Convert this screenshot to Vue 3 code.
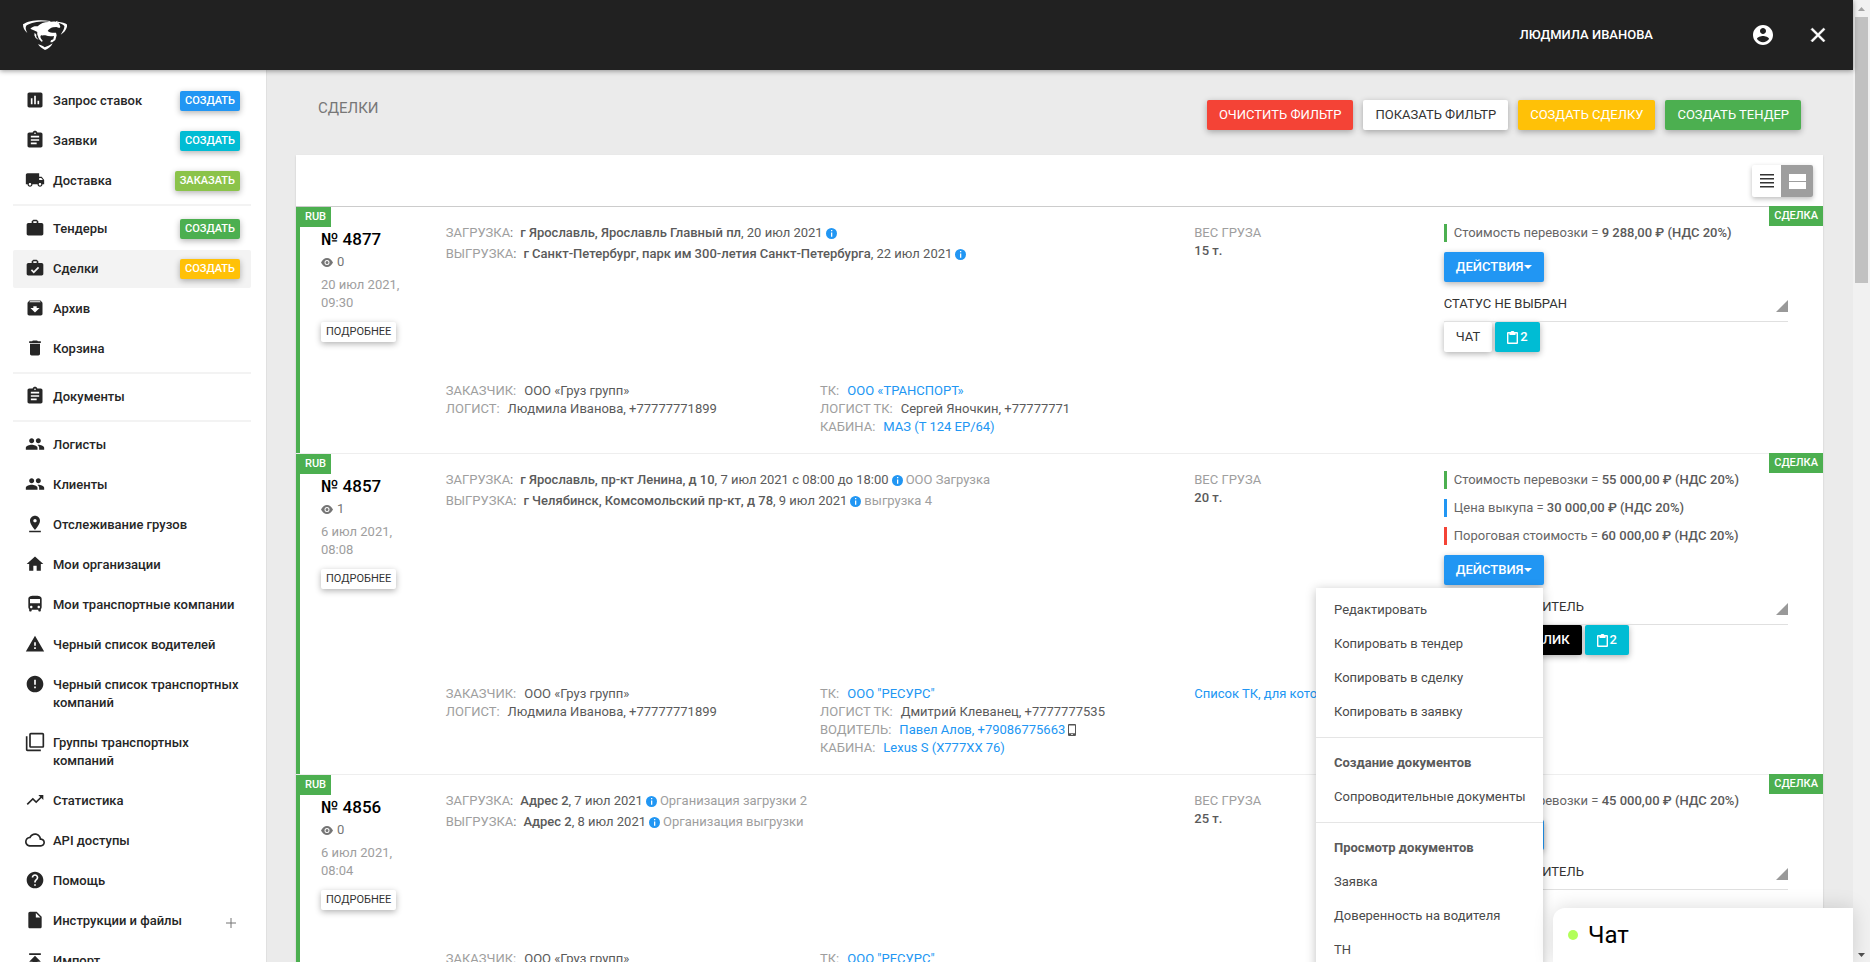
<script setup>
const icons = {
  chart: 'M19 3H5c-1.1 0-2 .9-2 2v14c0 1.1.9 2 2 2h14c1.1 0 2-.9 2-2V5c0-1.1-.9-2-2-2zM9 17H7v-7h2v7zm4 0h-2V7h2v10zm4 0h-2v-4h2v4z',
  clipboard: 'M19 3h-4.18C14.4 1.84 13.3 1 12 1s-2.4.84-2.82 2H5c-1.1 0-2 .9-2 2v14c0 1.1.9 2 2 2h14c1.1 0 2-.9 2-2V5c0-1.1-.9-2-2-2zm-7 0c.55 0 1 .45 1 1s-.45 1-1 1-1-.45-1-1 .45-1 1-1zm2 14H7v-2h7v2zm3-4H7v-2h10v2zm0-4H7V7h10v2z',
  truck: 'M20 8h-3V4H3c-1.1 0-2 .9-2 2v11h2c0 1.66 1.34 3 3 3s3-1.34 3-3h6c0 1.66 1.34 3 3 3s3-1.34 3-3h2v-5l-3-4zM6 18.5c-.83 0-1.5-.67-1.5-1.5s.67-1.5 1.5-1.5 1.5.67 1.5 1.5-.67 1.5-1.5 1.5zm13.5-9l1.96 2.5H17V9.5h2.5zm-1.5 9c-.83 0-1.5-.67-1.5-1.5s.67-1.5 1.5-1.5 1.5.67 1.5 1.5-.67 1.5-1.5 1.5z',
  case: 'M20 6h-4V4l-2-2h-4L8 4v2H4c-1.1 0-2 .9-2 2v11c0 1.1.9 2 2 2h16c1.1 0 2-.9 2-2V8c0-1.1-.9-2-2-2zm-6 0h-4V4h4v2z',
  caseCheck: 'M20 6h-4V4l-2-2h-4L8 4v2H4c-1.1 0-2 .9-2 2v11c0 1.1.9 2 2 2h16c1.1 0 2-.9 2-2V8c0-1.1-.9-2-2-2zM10 4h4v2h-4V4zm.5 14.5L7 15l1.4-1.4 2.1 2.1 5.1-5.1L17 12l-6.5 6.5z',
  archive: 'M20.54 5.23l-1.39-1.68C18.88 3.21 18.47 3 18 3H6c-.47 0-.88.21-1.16.55L3.46 5.23C3.17 5.57 3 6.02 3 6.5V19c0 1.1.9 2 2 2h14c1.1 0 2-.9 2-2V6.5c0-.48-.17-.93-.46-1.27zM12 17.5L6.5 12H10v-2h4v2h3.5L12 17.5zM5.12 5l.81-1h12l.94 1H5.12z',
  trash: 'M6 19c0 1.1.9 2 2 2h8c1.1 0 2-.9 2-2V7H6v12zM19 4h-3.5l-1-1h-5l-1 1H5v2h14V4z',
  people: 'M16 11c1.66 0 2.99-1.34 2.99-3S17.66 5 16 5s-3 1.34-3 3 1.34 3 3 3zm-8 0c1.66 0 2.99-1.34 2.99-3S9.66 5 8 5 5 6.34 5 8s1.34 3 3 3zm0 2c-2.33 0-7 1.17-7 3.5V19h14v-2.5c0-2.33-4.67-3.5-7-3.5zm8 0c-.29 0-.62.02-.97.05 1.16.84 1.97 1.97 1.97 3.45V19h6v-2.5c0-2.33-4.67-3.5-7-3.5z',
  pin: 'M18 8c0-3.31-2.69-6-6-6S6 4.69 6 8c0 4.5 6 11 6 11s6-6.5 6-11zm-8 0c0-1.1.9-2 2-2s2 .9 2 2-.89 2-2 2-2-.9-2-2zM5 20v2h14v-2H5z',
  home: 'M10 20v-6h4v6h5v-8h3L12 3 2 12h3v8z',
  bus: 'M12 2c-4.42 0-8 .5-8 4v10c0 .88.39 1.67 1 2.22V20c0 .55.45 1 1 1h1c.55 0 1-.45 1-1v-1h8v1c0 .55.45 1 1 1h1c.55 0 1-.45 1-1v-1.78c.61-.55 1-1.34 1-2.22V6c0-3.5-3.58-4-8-4zM7.5 17c-.83 0-1.5-.67-1.5-1.5S6.67 14 7.5 14s1.5.67 1.5 1.5S8.33 17 7.5 17zm9 0c-.83 0-1.5-.67-1.5-1.5s.67-1.5 1.5-1.5 1.5.67 1.5 1.5-.67 1.5-1.5 1.5zM18 11H6V6h12v5z',
  warning: 'M1 21h22L12 2 1 21zm12-3h-2v-2h2v2zm0-4h-2v-4h2v4z',
  error: 'M12 2C6.48 2 2 6.48 2 12s4.48 10 10 10 10-4.48 10-10S17.52 2 12 2zm1 15h-2v-2h2v2zm0-4h-2V7h2v6z',
  frames: 'M3 5H1v16c0 1.1.9 2 2 2h16v-2H3V5zm18-4H7c-1.1 0-2 .9-2 2v14c0 1.1.9 2 2 2h14c1.1 0 2-.9 2-2V3c0-1.1-.9-2-2-2zm0 16H7V3h14v14z',
  trend: 'M16 6l2.29 2.29-4.88 4.88-4-4L2 16.59 3.41 18l6-6 4 4 6.3-6.29L22 12V6z',
  cloud: 'M19.35 10.04C18.67 6.59 15.64 4 12 4 9.11 4 6.6 5.64 5.35 8.04 2.34 8.36 0 10.91 0 14c0 3.31 2.69 6 6 6h13c2.76 0 5-2.24 5-5 0-2.64-2.05-4.78-4.65-4.96zM19 18H6c-2.21 0-4-1.79-4-4s1.79-4 4-4h.71C7.37 7.69 9.48 6 12 6c3.04 0 5.5 2.46 5.5 5.5v.5H19c1.66 0 3 1.34 3 3s-1.34 3-3 3z',
  help: 'M12 2C6.48 2 2 6.48 2 12s4.48 10 10 10 10-4.48 10-10S17.52 2 12 2zm1 17h-2v-2h2v2zm2.07-7.75l-.9.92C13.45 12.9 13 13.5 13 15h-2v-.5c0-1.1.45-2.1 1.17-2.83l1.24-1.26c.37-.36.59-.86.59-1.41 0-1.1-.9-2-2-2s-2 .9-2 2H8c0-2.21 1.79-4 4-4s4 1.79 4 4c0 .88-.36 1.68-.93 2.25z',
  file: 'M6 2c-1.1 0-2 .9-2 2v16c0 1.1.9 2 2 2h12c1.1 0 2-.9 2-2V8l-6-6H6zm7 7V3.5L18.5 9H13z',
  upload: 'M5 4v2h14V4H5zm0 10h4v6h6v-6h4l-7-7-7 7z'
}

const groups = [
  [
    { icon: 'chart', label: 'Запрос ставок', action: 'Создать', tone: 'blue' },
    { icon: 'clipboard', label: 'Заявки', action: 'Создать', tone: 'cyan' },
    { icon: 'truck', label: 'Доставка', action: 'Заказать', tone: 'lime' }
  ],
  [
    { icon: 'case', label: 'Тендеры', action: 'Создать', tone: 'green' },
    { icon: 'caseCheck', label: 'Сделки', action: 'Создать', tone: 'amber', active: true },
    { icon: 'archive', label: 'Архив' },
    { icon: 'trash', label: 'Корзина' }
  ],
  [{ icon: 'clipboard', label: 'Документы' }],
  [
    { icon: 'people', label: 'Логисты' },
    { icon: 'people', label: 'Клиенты' },
    { icon: 'pin', label: 'Отслеживание грузов' },
    { icon: 'home', label: 'Мои организации' },
    { icon: 'bus', label: 'Мои транспортные компании' },
    { icon: 'warning', label: 'Черный список водителей' },
    { icon: 'error', label: 'Черный список транспортных компаний' },
    { icon: 'frames', label: 'Группы транспортных компаний' },
    { icon: 'trend', label: 'Статистика' },
    { icon: 'cloud', label: 'API доступы' },
    { icon: 'help', label: 'Помощь' },
    { icon: 'file', label: 'Инструкции и файлы', expandable: true },
    { icon: 'upload', label: 'Импорт' }
  ]
]

const customer = [
  { label: 'Заказчик', value: 'ООО «Груз групп»' },
  { label: 'Логист', value: 'Людмила Иванова, +77777771899' }
]

const deals = [
  {
    number: 4877,
    views: 0,
    created: '20 июл 2021, 09:30',
    route: [
      { label: 'Загрузка', address: 'г Ярославль, Ярославль Главный пл', date: '20 июл 2021' },
      { label: 'Выгрузка', address: 'г Санкт-Петербург, парк им 300-летия Санкт-Петербурга', date: '22 июл 2021' }
    ],
    weight: '15 т.',
    prices: [{ label: 'Стоимость перевозки', value: '9 288,00 ₽ (НДС 20%)', tone: 'green' }],
    status: 'Статус не выбран',
    files: 2,
    carrier: [
      { label: 'ТК', value: 'ООО «ТРАНСПОРТ»', link: true },
      { label: 'Логист ТК', value: 'Сергей Яночкин, +77777771' },
      { label: 'Кабина', value: 'МАЗ (Т 124 ЕР/64)', link: true }
    ]
  },
  {
    number: 4857,
    views: 1,
    created: '6 июл 2021, 08:08',
    route: [
      { label: 'Загрузка', address: 'г Ярославль, пр-кт Ленина, д 10', date: '7 июл 2021 с 08:00 до 18:00', note: 'ООО Загрузка' },
      { label: 'Выгрузка', address: 'г Челябинск, Комсомольский пр-кт, д 78', date: '9 июл 2021', note: 'выгрузка 4' }
    ],
    weight: '20 т.',
    prices: [
      { label: 'Стоимость перевозки', value: '55 000,00 ₽ (НДС 20%)', tone: 'green' },
      { label: 'Цена выкупа', value: '30 000,00 ₽ (НДС 20%)', tone: 'blue' },
      { label: 'Пороговая стоимость', value: '60 000,00 ₽ (НДС 20%)', tone: 'red' }
    ],
    status: 'Назначен водитель',
    response: '1 отклик',
    files: 2,
    open: true,
    hiddenFor: 'Список ТК, для которых скрыто',
    carrier: [
      { label: 'ТК', value: 'ООО "РЕСУРС"', link: true },
      { label: 'Логист ТК', value: 'Дмитрий Клеванец, +7777777535' },
      { label: 'Водитель', value: 'Павел Алов, +79086775663', link: true, phone: true },
      { label: 'Кабина', value: 'Lexus S (X777XX 76)', link: true }
    ]
  },
  {
    number: 4856,
    views: 0,
    created: '6 июл 2021, 08:04',
    route: [
      { label: 'Загрузка', address: 'Адрес 2', date: '7 июл 2021', note: 'Организация загрузки 2' },
      { label: 'Выгрузка', address: 'Адрес 2', date: '8 июл 2021', note: 'Организация выгрузки' }
    ],
    weight: '25 т.',
    prices: [{ label: 'Стоимость перевозки', value: '45 000,00 ₽ (НДС 20%)', tone: 'green' }],
    status: 'Назначен водитель',
    carrier: [{ label: 'ТК', value: 'ООО "РЕСУРС"', link: true }]
  }
]

const menu = [
  { items: ['Редактировать', 'Копировать в тендер', 'Копировать в сделку', 'Копировать в заявку'] },
  { title: 'Создание документов', items: ['Сопроводительные документы'] },
  { title: 'Просмотр документов', items: ['Заявка', 'Доверенность на водителя', 'ТН'] }
]
</script>

<template>
  <div class="window">
    <div class="app">
      <header class="topbar">
        <a class="logo" href="#" aria-label="Главная">
          <svg viewBox="0 0 132 90" width="44" height="30" fill="#fff" aria-hidden="true">
            <path d="M82 3C52-2 16 1 0 13c0 10 4 19 13 26C8 29 6 21 11 16 27 7 55 2 82 6z" />
            <path d="M105 5c12 1 24 5 28 9-1 13-8 23-20 30 7-10 12-19 11-26-5-5-11-8-19-9z" />
            <path d="M22 26c8-8 16-8 22-7 8-9 20-13 32-13 8-1 16-2 22-1l5-3 1 5c5 4 7 9 8 14l-3 3-9-3-10 1c-7 2-13 6-16 11 8 6 16 5 25 5l2 8-4 14-9 7h-6l2-6 7-3 2-10c-10 1-18 1-26-2-5 0-10 1-13 0l-2 4c1 5 4 8 7 12l-2 4c-6-5-11-9-12-17-2-4-3-8-2-13-5-4-12-5-21-10z" />
            <path d="M35 38l5 6v7l7 9-9-6-4-8z" />
            <path d="M45 73c8 2 15 5 20 9 9-3 17-7 24-12-5 11-14 17-23 20-8-4-16-9-21-17z" />
          </svg>
        </a>
        <span class="user-name">Людмила Иванова</span>
        <button class="icon-btn" type="button" aria-label="Профиль">
          <svg viewBox="0 0 24 24" width="24" height="24" fill="#fff"><path d="M12 2C6.48 2 2 6.48 2 12s4.48 10 10 10 10-4.48 10-10S17.52 2 12 2zm0 3c1.66 0 3 1.34 3 3s-1.34 3-3 3-3-1.34-3-3 1.34-3 3-3zm0 14.2c-2.5 0-4.71-1.28-6-3.22.03-1.99 4-3.08 6-3.08 1.99 0 5.97 1.09 6 3.08-1.29 1.94-3.5 3.22-6 3.22z" /></svg>
        </button>
        <button class="icon-btn" type="button" aria-label="Закрыть">
          <svg viewBox="0 0 24 24" width="24" height="24" fill="#fff" stroke="#fff" stroke-width=".5"><path d="M19 6.41L17.59 5 12 10.59 6.41 5 5 6.41 10.59 12 5 17.59 6.41 19 12 13.41 17.59 19 19 17.59 13.41 12z" /></svg>
        </button>
      </header>

      <div class="body">
        <nav class="sidebar">
          <ul v-for="(group, g) in groups" :key="g" class="nav-group">
            <li v-for="item in group" :key="item.label" class="nav-item" :class="{ active: item.active }">
              <a class="nav-link" href="#">
                <svg class="nav-icon" viewBox="0 0 24 24" width="20" height="20"><path :d="icons[item.icon]" /></svg>
                <span>{{ item.label }}</span>
              </a>
              <button v-if="item.action" type="button" class="btn small" :class="item.tone">{{ item.action }}</button>
              <svg v-if="item.expandable" class="plus" viewBox="0 0 10 10" width="10" height="10"><path d="M0 5h10M5 0v10" /></svg>
            </li>
          </ul>
        </nav>

        <main class="content">
          <div class="page-head">
            <h1>Сделки</h1>
            <div class="page-actions">
              <button type="button" class="btn red">Очистить фильтр</button>
              <button type="button" class="btn white">Показать фильтр</button>
              <button type="button" class="btn amber">Создать сделку</button>
              <button type="button" class="btn green">Создать тендер</button>
            </div>
          </div>

          <section class="card">
            <div class="card-tools">
              <div class="view-toggle">
                <button type="button" aria-label="Компактный вид">
                  <svg viewBox="0 0 14 14" width="14" height="14" fill="#333"><path d="M0 0h14v1.500H0zM0 4h14v1.500H0zM0 8h14v1.500H0zM0 12h14v1.500H0z" /></svg>
                </button>
                <button type="button" class="on" aria-label="Карточки">
                  <svg viewBox="0 0 17 15" width="17" height="15" fill="#fff"><path d="M0 0h17v7H0zM0 8h17v7H0z" /></svg>
                </button>
              </div>
            </div>

            <article v-for="deal in deals" :key="deal.number" class="deal">
              <div class="deal-body">
                <span class="tag currency">RUB</span>
                <span class="tag kind">Сделка</span>

                <div class="summary">
                  <h2>№ {{ deal.number }}</h2>
                  <p class="views">
                    <svg viewBox="0 0 24 18" width="12" height="9" fill="#757575"><path fill-rule="evenodd" d="M12 0C7 0 2.700 4 0 9c2.700 5 7 9 12 9s9.300-4 12-9c-2.700-5-7-9-12-9zm0 14a5 5 0 1 1 0-10 5 5 0 0 1 0 10zm0-2a3 3 0 1 0 0-6 3 3 0 0 0 0 6z" /></svg>
                    {{ deal.views }}
                  </p>
                  <p class="created">{{ deal.created }}</p>
                  <button type="button" class="btn small white">Подробнее</button>
                </div>

                <div class="route">
                  <p v-for="stop in deal.route" :key="stop.label">
                    <span class="label">{{ stop.label }}<i>:</i></span>
                    <span><b>{{ stop.address }}</b>, {{ stop.date }}</span>
                    <svg class="info" viewBox="0 0 11 11" width="11" height="11"><circle cx="5.500" cy="5.500" r="5.500" fill="#2196f3" /><path d="M5 2h1.300v1.300H5zM5 4.500h1.300v4.300H5z" fill="#fff" /></svg>
                    <span v-if="stop.note" class="note">{{ stop.note }}</span>
                  </p>
                </div>

                <div class="weight">
                  <p class="label">Вес груза</p>
                  <p><b>{{ deal.weight }}</b></p>
                </div>

                <div class="actions">
                  <p v-for="price in deal.prices" :key="price.label" class="price" :class="price.tone + '-bar'">
                    {{ price.label }} = <b>{{ price.value }}</b>
                  </p>
                  <div class="dropdown">
                    <button type="button" class="btn blue">
                      Действия<svg viewBox="0 0 8 4" width="8" height="4" fill="#fff"><path d="M0 0h8L4 4z" /></svg>
                    </button>
                    <div v-if="deal.open" class="menu">
                      <ul v-for="(part, m) in menu" :key="m">
                        <li v-if="part.title" class="menu-title">{{ part.title }}</li>
                        <li v-for="entry in part.items" :key="entry"><a href="#">{{ entry }}</a></li>
                      </ul>
                    </div>
                  </div>
                  <div class="select">
                    <select aria-label="Статус"><option>{{ deal.status }}</option></select>
                  </div>
                  <div class="action-row">
                    <button type="button" class="btn white">Чат</button>
                    <button v-if="deal.response" type="button" class="btn black">{{ deal.response }}</button>
                    <button v-if="deal.files" type="button" class="btn cyan">
                      <svg viewBox="0 0 11 13" width="11" height="13" fill="#fff"><path fill-rule="evenodd" d="M1 1h2.500l1-1h2l1 1H10a1 1 0 0 1 1 1v10a1 1 0 0 1-1 1H1a1 1 0 0 1-1-1V2a1 1 0 0 1 1-1zm.4 1.500v9.100h8.200V2.500H8.500V4h-6V2.500z" /></svg>{{ deal.files }}
                    </button>
                  </div>
                </div>

                <dl class="party customer">
                  <div v-for="row in customer" :key="row.label"><dt>{{ row.label }}:</dt><dd>{{ row.value }}</dd></div>
                </dl>
                <dl class="party carrier">
                  <div v-for="row in deal.carrier" :key="row.label">
                    <dt>{{ row.label }}:</dt>
                    <dd>
                      <a v-if="row.link" href="#">{{ row.value }}</a><template v-else>{{ row.value }}</template>
                      <svg v-if="row.phone" class="phone" viewBox="0 0 8 12" width="8" height="12" fill="#555"><path fill-rule="evenodd" d="M1 0h6a1 1 0 0 1 1 1v10a1 1 0 0 1-1 1H1a1 1 0 0 1-1-1V1a1 1 0 0 1 1-1zm0 1.600v7.700h6V1.600zM3 10.300v.8h2v-.8z" /></svg>
                    </dd>
                  </div>
                </dl>
                <a v-if="deal.hiddenFor" class="hidden-for" href="#">{{ deal.hiddenFor }}</a>
              </div>
            </article>
          </section>
        </main>
      </div>

      <button type="button" class="chat"><span class="dot"></span>Чат</button>
    </div>

    <div class="scrollbar" aria-hidden="true">
      <svg viewBox="0 0 17 17" width="17" height="17" fill="#a3a3a3"><path d="M8.500 7L12 11H5z" /></svg>
      <div class="thumb"></div>
      <svg class="down" viewBox="0 0 17 17" width="17" height="17" fill="#505050"><path d="M5 8h7l-3.500 4z" /></svg>
    </div>
  </div>
</template>

<style>
body {
  margin: 0;
}
</style>

<style scoped>
* {
  box-sizing: border-box;
}
.window {
  display: flex;
  height: 100vh;
  overflow: hidden;
  font: 13px/18px Roboto, "Liberation Sans", sans-serif;
  color: #5a5a5a;
  background: #ebebeb;
}
h1, h2, p, ul, dl, dd {
  margin: 0;
  padding: 0;
}
ul {
  list-style: none;
}
a {
  color: #2196f3;
  text-decoration: none;
}
b {
  font-weight: 500;
}
button, select {
  font: inherit;
  border: 0;
  padding: 0;
  background: none;
}
.app {
  position: relative;
  flex: 1;
  min-width: 0;
  display: flex;
  flex-direction: column;
}
.topbar {
  flex: none;
  position: relative;
  z-index: 2;
  display: flex;
  align-items: center;
  height: 70px;
  padding: 0 23px;
  background: #212121;
  box-shadow: 0 1px 5px rgba(0, 0, 0, 0.4);
}
.logo {
  margin-right: auto;
  line-height: 0;
}
.user-name {
  margin-right: 98px;
  font-weight: 500;
  text-transform: uppercase;
  color: #fff;
}
.icon-btn {
  width: 24px;
  height: 24px;
}
.icon-btn + .icon-btn {
  margin-left: 31px;
}
.body {
  flex: 1;
  min-height: 0;
  display: flex;
}
.sidebar {
  flex: none;
  width: 267px;
  padding: 12px 15px 0 13px;
  overflow: hidden;
  background: #fff;
  border-right: 1px solid #e0e0e0;
}
.nav-group + .nav-group {
  margin-top: 4px;
  padding-top: 4px;
  border-top: 2px solid #f3f3f3;
}
.nav-item {
  display: flex;
  align-items: flex-start;
  margin-bottom: 2px;
  padding-right: 11px;
  border-radius: 2px;
}
.nav-group .nav-item:last-child {
  margin-bottom: 0;
}
.nav-item.active {
  background: #f3f3f3;
}
.nav-link {
  flex: 1;
  display: flex;
  align-items: flex-start;
  gap: 8px;
  padding: 10px 0 10px 12px;
  font-weight: 500;
  color: #262626;
}
.nav-icon {
  flex: none;
  margin: -2px 0;
  height: 20px;
  fill: #262626;
}
.nav-item .btn {
  margin-top: 9px;
  font-weight: 500;
}
.plus {
  margin: 16px 4px 0 0;
  fill: none;
  stroke: #757575;
}
.btn {
  display: inline-flex;
  align-items: center;
  justify-content: center;
  height: 30px;
  padding: 0 12px;
  border-radius: 2px;
  text-transform: uppercase;
  white-space: nowrap;
  color: #fff;
  box-shadow: 0 2px 6px rgba(0, 0, 0, 0.3);
}
.btn.small {
  height: 20px;
  padding: 0 5px;
  font-size: 11px;
}
.red { background: #f44336; }
.amber { background: #ffc107; }
.green { background: #4caf50; }
.blue { background: #2196f3; }
.cyan { background: #00bcd4; }
.lime { background: #8bc34a; }
.black { background: #000; }
.btn.white {
  color: #333;
  background: #fff;
}
.content {
  flex: 1;
  min-width: 0;
  padding: 0 30px 0 29px;
  overflow: hidden;
}
.page-head {
  display: flex;
  justify-content: space-between;
  align-items: flex-start;
  padding: 30px 22px 25px;
}
h1 {
  font-size: 15px;
  line-height: 16px;
  font-weight: 400;
  text-transform: uppercase;
  color: #777;
}
.page-actions {
  display: flex;
  gap: 10px;
}
.card {
  background: #fff;
  box-shadow: 0 1px 2px rgba(0, 0, 0, 0.15);
}
.card-tools {
  display: flex;
  justify-content: flex-end;
  height: 51px;
  padding: 10px 10px 0;
}
.view-toggle {
  display: flex;
  height: 32px;
  border-radius: 2px;
  overflow: hidden;
  box-shadow: 0 2px 5px rgba(0, 0, 0, 0.26);
}
.view-toggle button {
  display: flex;
  align-items: center;
  justify-content: center;
  width: 29px;
}
.view-toggle .on {
  width: 32px;
  background: #9e9e9e;
}
.deal {
  border-top: 1px solid #eee;
}
.deal:nth-child(2) {
  border-top-color: #ccc;
}
.deal-body {
  position: relative;
  display: grid;
  grid-template-columns: repeat(12, 1fr);
  column-gap: 30px;
  padding: 17px 35px 17px 21px;
  border-left: 4px solid #4caf50;
}
.tag {
  position: absolute;
  top: 0;
  height: 20px;
  padding: 0 5px;
  font-size: 11px;
  line-height: 20px;
  font-weight: 500;
  text-transform: uppercase;
  color: #fff;
  background: #4caf50;
}
.currency {
  left: 0;
}
.kind {
  right: 0;
  top: -1px;
}
.summary {
  grid-column: span 1;
  padding-top: 4px;
}
h2 {
  font-size: 17px;
  line-height: 22px;
  font-weight: 500;
  white-space: nowrap;
  color: #000;
}
.views {
  display: flex;
  align-items: center;
  gap: 4px;
  padding: 3px 0 5px;
  color: #757575;
}
.created {
  padding-bottom: 10px;
  color: #9e9e9e;
}
.route {
  grid-column: span 6;
}
.route p {
  display: flex;
  align-items: center;
  gap: 3px;
  margin-bottom: 3px;
}
.route .label {
  margin-right: 4px;
}
.label {
  text-transform: uppercase;
  color: #9e9e9e;
}
.label i {
  font-style: normal;
  color: #757575;
}
.note {
  color: #9e9e9e;
}
.weight {
  grid-column: span 2;
}
.actions {
  grid-column: span 3;
}
.price {
  margin-bottom: 10px;
  padding-left: 7px;
  border-left: 3px solid;
  color: #666;
}
.price b {
  color: #5a5a5a;
}
.green-bar { border-color: #4caf50; }
.blue-bar { border-color: #2196f3; }
.red-bar { border-color: #f44336; }
.dropdown {
  position: relative;
  display: flex;
  width: max-content;
}
.actions .btn {
  font-weight: 500;
}
.actions .btn.white {
  font-weight: 400;
}
.menu {
  position: absolute;
  z-index: 1;
  top: 33px;
  right: 1px;
  padding: 5px 0;
  background: #fff;
  white-space: nowrap;
  box-shadow: 0 2px 10px rgba(0, 0, 0, 0.25);
}
.menu li {
  padding: 8px 17px 8px 18px;
}
.menu ul + ul {
  margin-top: 8px;
  padding-top: 8px;
  border-top: 1px solid #e5e5e5;
}
.menu a {
  color: #4a4a4a;
}
.menu-title {
  font-weight: 700;
}
.select {
  position: relative;
  margin-top: 4px;
  border-bottom: 1px solid #e0e0e0;
}
.select::after {
  content: "";
  position: absolute;
  right: 0;
  bottom: 9px;
  width: 12px;
  height: 12px;
  background: #999;
  clip-path: polygon(100% 0, 100% 100%, 0 100%);
  pointer-events: none;
}
select {
  display: block;
  width: 100%;
  height: 35px;
  appearance: none;
  text-transform: uppercase;
  color: #333;
}
.action-row {
  display: flex;
  gap: 3px;
  padding-bottom: 30px;
}
.action-row svg {
  margin-right: 2px;
}
.party > div {
  display: flex;
  gap: 8px;
}
.party dt {
  text-transform: uppercase;
  color: #9e9e9e;
}
.party dd {
  display: flex;
  align-items: center;
  gap: 3px;
}
.customer {
  grid-column: 2 / span 3;
}
.carrier {
  grid-column: 5 / span 3;
}
.hidden-for {
  grid-column: 8 / span 2;
  white-space: nowrap;
}
.chat {
  position: absolute;
  z-index: 3;
  right: 0;
  bottom: 0;
  display: flex;
  align-items: center;
  gap: 10px;
  width: 300px;
  height: 54px;
  padding: 0 15px;
  border-radius: 12px 0 0 0;
  font-size: 24px;
  line-height: 54px;
  color: #000;
  background: #fff;
  box-shadow: 0 0 20px rgba(0, 0, 0, 0.15);
}
.dot {
  width: 10px;
  height: 10px;
  border-radius: 50%;
  background: #b2ff59;
}
.scrollbar {
  flex: none;
  display: flex;
  flex-direction: column;
  width: 17px;
  background: #f1f1f1;
}
.thumb {
  height: 266px;
  margin: 0 2px;
  background: #c1c1c1;
}
.down {
  margin-top: auto;
}
</style>
